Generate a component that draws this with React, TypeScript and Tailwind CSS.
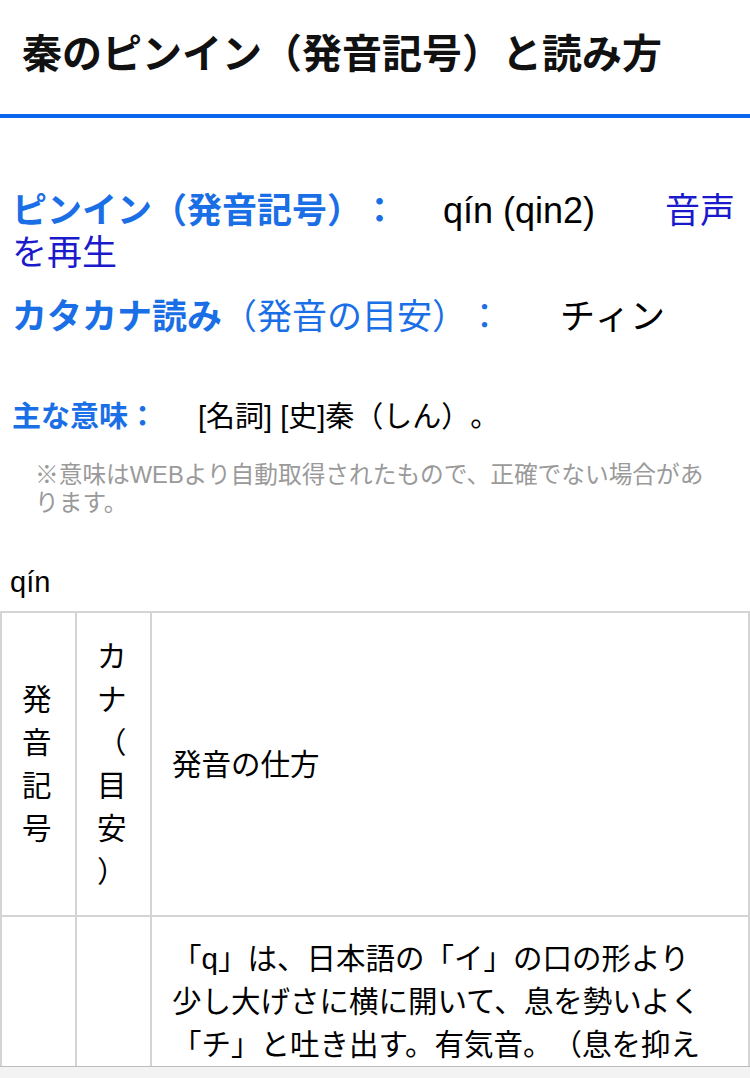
import React from "react";

const F = "font-['Liberation_Sans','Noto_Sans_CJK_JP',sans-serif]";

function Stack({ chars }: { chars: string[] }) {
  return (
    <div className="flex flex-col leading-[43px]">
      {chars.map((c, i) => (
        <span key={i}>{c}</span>
      ))}
    </div>
  );
}

export default function App() {
  return (
    <div className={`${F} [text-spacing-trim:space-all] bg-white text-black min-h-[1078px] w-[750px] overflow-hidden`}>
      <header className="h-[118px] border-b-4 border-[#0a66ea] flex items-center px-[22px] pb-[6px]">
        <h1 className="text-[40px] font-bold leading-[48px] text-[#111]">
          秦のピンイン（発音記号）と読み方
        </h1>
      </header>

      <section className="px-[12px] mt-[72px] text-[35px] leading-[42px]">
        <div>
          <span className="font-bold text-[#1a6fe6]">ピンイン（発音記号）：</span>
          <span className="ml-[46px] text-[36px]">qín (qin2)</span>
          <span className="ml-[70px] text-[#1a1acc]">音声</span>
          <br />
          <span className="text-[#1a1acc]">を再生</span>
        </div>
        <div className="mt-[22px]">
          <span className="font-bold text-[#1a6fe6]">カタカナ読み</span>
          <span className="text-[#1a6fe6]">（発音の目安）：</span>
          <span className="ml-[58px]">チィン</span>
        </div>
      </section>

      <section className="px-[12px] mt-[58px] text-[29px] leading-[42px]">
        <span className="font-bold text-[#1a6fe6]">主な意味：</span>
        <span className="ml-[41px]">[名詞] [史]秦（しん）。</span>
      </section>

      <p className="pl-[35px] mt-[23px] text-[23.7px] leading-[28px] text-[#9a9a9a]">
        ※意味はWEBより自動取得されたもので、正確でない場合があ
        <br />
        ります。
      </p>

      <p className="pl-[10px] mt-[45px] text-[29px] leading-[40px]">qín</p>

      <table className="mt-[9px] w-[750px] table-fixed border-collapse border-2 border-[#d4d4d4] text-[29.5px]">
        <colgroup>
          <col className="w-[75px]" />
          <col className="w-[75px]" />
          <col />
        </colgroup>
        <tbody>
          <tr>
            <td className="border-2 border-[#d4d4d4] px-[20px] py-[22px] align-middle">
              <Stack chars={["発", "音", "記", "号"]} />
            </td>
            <td className="border-2 border-[#d4d4d4] px-[20px] py-[22px] align-middle">
              <Stack chars={["カ", "ナ", "（", "目", "安", "）"]} />
            </td>
            <td className="border-2 border-[#d4d4d4] px-[20px] py-[22px] align-middle leading-[43px]">
              発音の仕方
            </td>
          </tr>
          <tr>
            <td className="border-2 border-[#d4d4d4] px-[20px] pt-[20px] pb-[40px] align-top"></td>
            <td className="border-2 border-[#d4d4d4] px-[20px] pt-[20px] pb-[40px] align-top"></td>
            <td className="border-2 border-[#d4d4d4] px-[20px] pt-[20px] pb-[40px] align-top leading-[43px]">
              <div>「q」は、日本語の「イ」の口の形より</div>
              <div>少し大げさに横に開いて、息を勢いよく</div>
              <div>「チ」と吐き出す。有気音。（息を抑え</div>
            </td>
          </tr>
        </tbody>
      </table>

      <div className="fixed bottom-0 left-0 w-[750px] h-[12px] border-t border-[#bdbdbd] bg-[#f3f3f3]"></div>
    </div>
  );
}
